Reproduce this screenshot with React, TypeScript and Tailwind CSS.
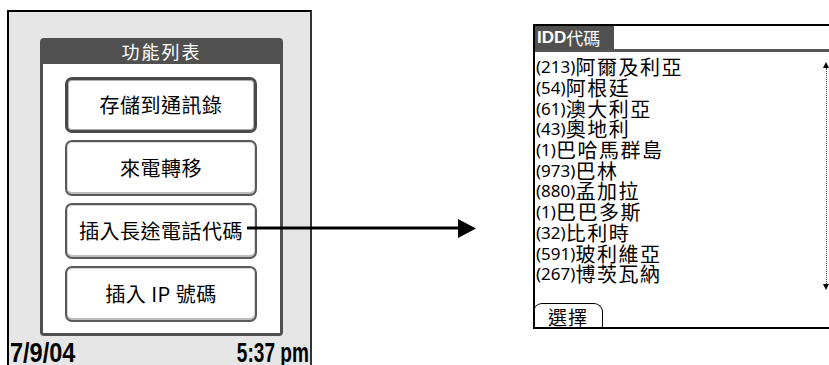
import React from "react";

const cjk = { fontFamily: '"Noto Sans CJK TC", "Noto Sans CJK SC", sans-serif' };

const menuItems = ["存儲到通訊錄", "來電轉移", "插入長途電話代碼", "插入 IP 號碼"];

const countries: [string, string][] = [
  ["213", "阿爾及利亞"],
  ["54", "阿根廷"],
  ["61", "澳大利亞"],
  ["43", "奧地利"],
  ["1", "巴哈馬群島"],
  ["973", "巴林"],
  ["880", "孟加拉"],
  ["1", "巴巴多斯"],
  ["32", "比利時"],
  ["591", "玻利維亞"],
  ["267", "博茨瓦納"],
];

function MenuButton({ label, focused }: { label: string; focused?: boolean }) {
  return (
    <div
      className={`h-[56px] w-[192px] rounded-[7px] bg-white flex items-center justify-center text-[20px] tracking-[0.5px] leading-none text-black ${
        focused
          ? "border-[3px] border-[#4a4a4a] shadow-[inset_0_0_0_1px_#b0b0b0]"
          : "border-2 border-[#5a5a5a] shadow-[inset_0_-2px_0_#bdbdbd,inset_0_0_0_1px_#d8d8d8]"
      }`}
      style={cjk}
    >
      {label}
    </div>
  );
}

function PhoneMenu() {
  return (
    <div className="mt-[10px] ml-[7px] w-[305px] h-[355px] bg-[#e6e6e6] border-l-2 border-t-2 border-r-2 border-l-black border-t-black border-r-[#333] flex flex-col">
      <div className="mt-[26px] ml-[31px] w-[243px] h-[298px] flex flex-col">
        <div className="h-[26px] bg-[#505050] rounded-t-[4px] flex items-center justify-center text-white text-[18px] tracking-[2px] leading-none" style={cjk}>
          功能列表
        </div>
        <div className="flex-1 bg-white border-x-[3px] border-b-[3px] border-[#505050] rounded-b-[4px] flex flex-col gap-[7px] pt-[13px] pl-[22px]">
          {menuItems.map((m, i) => (
            <MenuButton key={i} label={m} focused={i === 0} />
          ))}
        </div>
      </div>
      <div className="mt-[6px] px-[1px] h-[22px] flex justify-between items-start font-bold text-black text-[28px] leading-[22px]" style={{ fontFamily: '"Liberation Sans", Arial, sans-serif' }}>
        <span className="inline-block origin-left scale-x-[0.84]">7/9/04</span>
        <span className="inline-block origin-right scale-x-[0.68]">5:37 pm</span>
      </div>
    </div>
  );
}

function IddList() {
  return (
    <div className="relative mt-[24px] ml-[221px] w-[296px] h-[305px] bg-white border-l-2 border-t-2 border-b-2 border-black flex flex-col">
      <div className="h-[23px] flex">
        <div className="w-[79px] bg-[#505050] text-white flex items-center pl-[2px] text-[17px] leading-none" style={cjk}>
          <span className="font-bold" style={{ fontFamily: '"Liberation Sans", Arial, sans-serif' }}>IDD</span>
          <span>代碼</span>
        </div>
      </div>
      <div className="h-[3px] bg-[#555]" />
      <div className="pt-[5px] pl-[1px] flex flex-col">
        {countries.map(([code, name], i) => (
          <div key={i} className="h-[20.7px] flex items-center leading-[20px] text-black whitespace-nowrap">
            <span className="text-[17px]" style={{ fontFamily: '"Noto Sans", sans-serif' }}>({code})</span>
            <span className="text-[20px] tracking-[1.5px]" style={cjk}>{name}</span>
          </div>
        ))}
      </div>
      <div className="mt-auto ml-[-2px] mb-[-2px] w-[70px] h-[26px] rounded-t-[9px] rounded-b-[4px] border border-black border-b-0 flex items-center justify-center text-[19px] tracking-[1px] leading-none" style={cjk}>
        選擇
      </div>
      {/* scroll indicator */}
      <div className="absolute right-0 top-[36px] h-[228px] w-[6px] flex flex-col items-center">
        <div className="w-0 h-0 border-l-[3px] border-r-[3px] border-b-[6px] border-l-transparent border-r-transparent border-b-black" />
        <div className="flex-1 border-l border-dotted border-[#444]" />
        <div className="w-0 h-0 border-l-[3px] border-r-[3px] border-t-[6px] border-l-transparent border-r-transparent border-t-black" />
      </div>
    </div>
  );
}

export default function App() {
  return (
    <div className="relative w-[829px] h-[365px] bg-white overflow-hidden flex items-start">
      <PhoneMenu />
      <IddList />
      <svg className="absolute left-0 top-0 pointer-events-none" width="829" height="365">
        <line x1="247" y1="228" x2="460" y2="228" stroke="black" strokeWidth="3" />
        <polygon points="458,219 476,228.5 458,238" fill="black" />
      </svg>
    </div>
  );
}
